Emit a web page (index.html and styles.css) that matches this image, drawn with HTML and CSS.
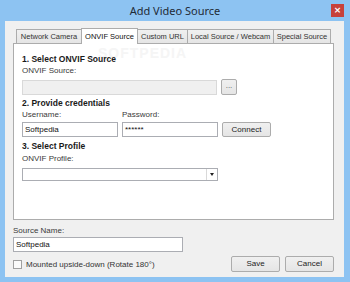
FILE: index.html
```html
<!DOCTYPE html>
<html>
<head>
<meta charset="utf-8">
<link rel="stylesheet" href="styles.css">
</head>
<body>
<div class="window">
  <div class="titlebar">
    <span></span>
    <span class="title">Add Video Source</span>
    <span class="close">×</span>
  </div>
  <div class="client">
    <div class="tabs">
      <div class="tab t1">Network Camera</div>
      <div class="tab active t2">ONVIF Source</div>
      <div class="tab t3">Custom URL</div>
      <div class="tab t4">Local Source / Webcam</div>
      <div class="tab t5">Special Source</div>
    </div>
    <div class="panel">
      <div class="heading">1. Select ONVIF Source</div>
      <div class="label">ONVIF Source:</div>
      <div class="row r1">
        <div class="input disabled w-src"></div>
        <div class="btn small">...</div>
      </div>
      <div class="heading h2">2. Provide credentials</div>
      <div class="row">
        <div class="label col">Username:</div>
        <div class="label col">Password:</div>
      </div>
      <div class="row r2">
        <div class="input col">Softpedia</div>
        <div class="input col">******</div>
        <div class="btn connect">Connect</div>
      </div>
      <div class="heading h3">3. Select Profile</div>
      <div class="label l3">ONVIF Profile:</div>
      <div class="combo">
        <div class="combo-field"></div>
        <div class="combo-arrow"><span class="tri"></span></div>
      </div>
    </div>
    <div class="label sn">Source Name:</div>
    <div class="input name">Softpedia</div>
    <div class="bottom">
      <div class="check"><span class="box"></span><span>Mounted upside-down (Rotate 180°)</span></div>
      <div class="buttons">
        <div class="btn action">Save</div>
        <div class="btn action">Cancel</div>
      </div>
    </div>
  </div>
</div>
</body>
</html>
```

FILE: styles.css
```css
* { box-sizing: border-box; }
html, body { margin: 0; padding: 0; }
body {
  width: 350px; height: 282px; overflow: hidden;
  font-family: "Liberation Sans", Arial, sans-serif;
  font-size: 8px; color: #222;
  white-space: nowrap;
}
.window {
  width: 350px; height: 282px;
  background: #8dc3f2;
  display: flex; flex-direction: column;
}
.titlebar {
  height: 21px;
  display: grid;
  grid-template-columns: 1fr auto 1fr;
  align-items: center;
}
.title {
  font-family: "Noto Sans", sans-serif;
  font-size: 11px; color: #1f2a36; line-height: 21px;
}
.close {
  justify-self: end;
  margin-right: 6px; margin-top: -1px;
  width: 13px; height: 13px;
  background: #c7403a;
  color: #fff; font-size: 9px; line-height: 12px; text-align: center;
  font-family: "DejaVu Sans", sans-serif; font-weight: bold;
}
.client {
  margin: 0 6px 5px 5px;
  flex: 1;
  background: #f0f0f0;
  padding: 7px 10px 0 8px;
  display: flex; flex-direction: column;
}
.tabs {
  display: flex;
  padding-left: 3px;
  height: 15px;
  align-items: flex-end;
  position: relative; z-index: 1;
}
.tab {
  height: 14px;
  border: 1px solid #acacac;
  border-bottom: none;
  background: linear-gradient(#f0f0f0, #e5e5e5);
  color: #333;
  font-size: 7.5px;
  line-height: 13px;
  text-align: center;
  margin-left: -1px;
}
.t1 { width: 66px; margin-left: 0; }
.t2 { width: 57px; }
.t3 { width: 51px; }
.t4 { width: 87px; }
.t5 { width: 58px; }
.tab.active {
  height: 16px;
  background: #fff;
  margin-bottom: -1px;
  color: #111;
  line-height: 15px;
}
.panel {
  position: relative;
  height: 177px;
  background: #fff;
  border: 1px solid #acacac;
  padding: 9px 8px 0 8px;
  display: flex; flex-direction: column;
}
.panel::before {
  content: "SOFTPEDIA";
  position: absolute; left: 84px; top: 1px;
  font-size: 14px; font-weight: bold; letter-spacing: 1px;
  color: #f5f5f5;
}
.heading {
  position: relative;
  font-weight: bold; font-size: 8.5px; color: #1a1a1a;
  height: 12px; line-height: 12px;
}
.label { color: #3a3a3a; height: 12px; line-height: 12px; }
.row { display: flex; gap: 4px; align-items: center; }
.r1 { margin-top: 2px; }
.h2 { margin-top: 2px; }
.r2 { margin-top: 1px; }
.h3 { margin-top: 3px; }
.l3 { margin-top: 1px; }
.input {
  height: 15px; border: 1px solid #abadb3; background: #fff;
  line-height: 13px; padding-left: 2px; color: #111;
}
.input.disabled { background: #f0f0f0; border-color: #d9d9d9; }
.w-src { width: 195px; }
.col { width: 96px; }
.btn {
  border: 1px solid #acacac;
  border-radius: 2px;
  background: linear-gradient(#f0f0f0, #e5e5e5);
  text-align: center; color: #222;
}
.small { width: 16px; height: 16px; line-height: 12px; color: #555; }
.connect { width: 49px; height: 15px; line-height: 13px; }
.combo {
  margin-top: 3px;
  display: flex; width: 196px; height: 13px;
  border: 1px solid #abadb3; background: #fff;
}
.combo-field { flex: 1; border-right: 1px solid #d9d9d9; }
.combo-arrow { width: 10px; display: flex; align-items: center; justify-content: center; }
.tri { width: 0; height: 0; border-left: 2px solid transparent; border-right: 2px solid transparent; border-top: 3px solid #222; }
.sn { margin-top: 6px; height: 10px; line-height: 10px; }
.name { width: 170px; margin-top: 1px; }
.bottom { display: flex; justify-content: space-between; align-items: center; margin-top: 4px; }
.check { display: flex; align-items: center; gap: 4px; color: #333; }
.box { width: 9px; height: 9px; border: 1px solid #a0a0a0; background: #fafafa; }
.buttons { display: flex; gap: 5px; }
.action { width: 49px; height: 16px; line-height: 14px; }
```
